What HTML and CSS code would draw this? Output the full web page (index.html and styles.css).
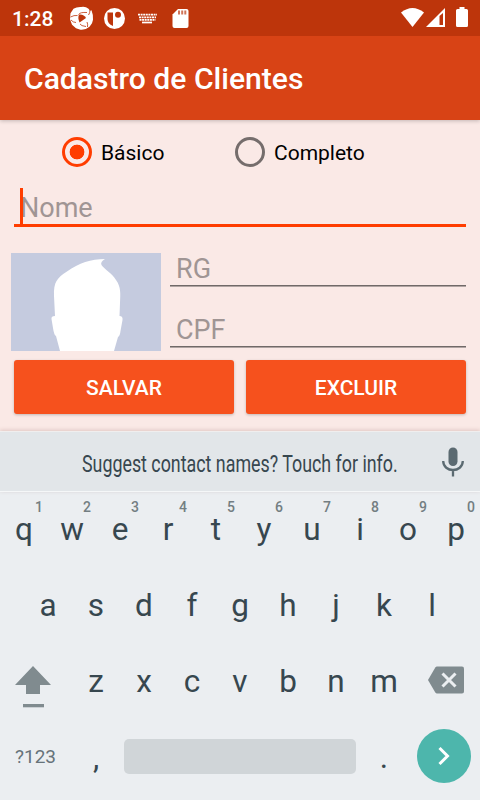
FILE: index.html
```html
<!DOCTYPE html>
<html lang="pt-BR">
<head>
<meta charset="utf-8">
<title>Cadastro de Clientes</title>
<link rel="stylesheet" href="styles.css">
</head>
<body>
<header class="status">
  <span class="time">1:28</span>
  <svg class="status-icons" width="130" height="36" viewBox="70 0 130 36" fill="#fff">
    <path d="M81 7q3-.5 5 .3l2.500 1.500 1.500 2 1.500-.5q2 5 1.500 9.500l-1 3.500-2.500 3.500q-4 3.500-9 3l-4.500-1.500-4-3.500-2-5.500.5-6 3-4.500q3-2 7.500-1.800z"/>
    <g fill="none" stroke="#bd350b" stroke-width=".8">
      <path d="M78.500 14.500Q80 12 87 12.500M88.500 15Q90 13 90 10M87 22Q88 24 87.500 27M80 24Q81 26 86 26.500M76 22.500Q73 22.500 71 20M77.500 15.500Q74 15 70.500 17"/>
    </g>
    <path d="M79 14.500Q84 14 86 18L79.500 22.500Q77.500 18 79 14.500z" fill="#bd350b"/>
    <circle cx="114.500" cy="18.500" r="10.500"/>
    <path d="M107.500 12.500h5.500v13.500q-5.500-2-5.500-7z" fill="#bd350b"/>
    <circle cx="118" cy="14.700" r="3" fill="#bd350b"/>
    <g fill="none" stroke="#fff" stroke-width="1.700">
      <path d="M138 14.700h19" stroke-dasharray="2 .6"/>
      <path d="M139 17.300h17" stroke-dasharray="2 .6"/>
      <path d="M139.500 19.800h16" stroke-dasharray="2 .6"/>
      <path d="M142 22.500h10"/>
    </g>
    <path d="M178 9h8.500q2 0 2 2v15q0 2-2 2h-12q-2 0-2-2V14.500z"/>
    <path d="M178 10.500h2v4h-2zM181.200 10.500h2v4h-2zM184.300 10.500h2v4h-2z" fill="#d0755a"/>
  </svg>
  <svg class="signal" width="70" height="36" viewBox="400 0 70 36" fill="#fff">
    <path d="M401 12.500q11.500-9 23 0L412.500 27z"/>
    <path d="M445 8v19h-19z"/>
    <path d="M440 15.500l3-2.500v12h-3.500v-9z" fill="#bd350b"/>
    <path d="M459.500 7h5v2h2q1.500 0 1.500 1.500v15q0 1.500-1.500 1.500h-9q-1.500 0-1.500-1.500v-15q0-1.500 1.500-1.500h2z"/>
  </svg>
</header>
<div class="appbar"><h1>Cadastro de Clientes</h1></div>
<main class="form">
  <div class="radios">
    <div class="radio on"><i class="ring"></i><span>Básico</span></div>
    <div class="radio"><i class="ring"></i><span>Completo</span></div>
  </div>
  <div class="field name"><i class="caret"></i><span>Nome</span></div>
  <div class="person">
    <svg class="photo" width="150" height="98" viewBox="0 0 150 98">
      <path fill="#c5cbdf" d="M0 0h150v98H0z"/>
      <path fill="#fff" d="M49 98L45 83Q43 82 42 75L40.500 66Q40 63 44 63L43 43C42.500 29 46 25 56 18.500C68 10 80 6 94 6Q89 9 90.500 12C93 16 101 20 105 27C110 34 109.500 40 109 50L108.500 63Q112 63 111.500 67L109.500 78Q109 83 107 84L103 98Z"/>
    </svg>
    <div class="docs">
      <div class="field doc"><span>RG</span></div>
      <div class="field doc"><span>CPF</span></div>
    </div>
  </div>
  <div class="actions">
    <div class="btn">SALVAR</div>
    <div class="btn">EXCLUIR</div>
  </div>
</main>
<div class="suggest">
  <span class="suggest-text">Suggest contact names? Touch for info.</span>
  <svg class="mic" width="22" height="30" viewBox="0 0 22 30">
    <rect x="6.500" y="0.500" width="9" height="18.500" rx="4.500" fill="#5b6a71"/>
    <path d="M1.200 14C1.200 26 20.800 26 20.800 14M11 23v6.500" fill="none" stroke="#5b6a71" stroke-width="2.300"/>
  </svg>
</div>
<section class="keyboard">
  <div class="row top">
    <div class="key">q<sup>1</sup></div><div class="key">w<sup>2</sup></div><div class="key">e<sup>3</sup></div><div class="key">r<sup>4</sup></div><div class="key">t<sup>5</sup></div><div class="key">y<sup>6</sup></div><div class="key">u<sup>7</sup></div><div class="key">i<sup>8</sup></div><div class="key">o<sup>9</sup></div><div class="key">p<sup>0</sup></div>
  </div>
  <div class="row">
    <div class="key">a</div><div class="key">s</div><div class="key">d</div><div class="key">f</div><div class="key">g</div><div class="key">h</div><div class="key">j</div><div class="key">k</div><div class="key">l</div>
  </div>
  <div class="row">
    <div class="wide"><svg class="shift" width="36" height="42" viewBox="0 0 36 42" fill="#808b8f"><path d="M18 0l18 19H25v9H11v-9H0z"/><path d="M8 38h21v3.300H8z"/></svg></div>
    <div class="key">z</div><div class="key">x</div><div class="key">c</div><div class="key">v</div><div class="key">b</div><div class="key">n</div><div class="key">m</div>
    <div class="wide"><svg class="erase" width="36" height="28" viewBox="0 0 36 28"><path fill="#808b8f" d="M9 .5H34q2 0 2 2v23q0 2-2 2H9q-1 0-1.700-1L0 14 7.300 1.500Q8 .5 9 .5z"/><path d="M14.500 7.500l13 13M27.500 7.500l-13 13" stroke="#ebeef1" stroke-width="3"/></svg></div>
  </div>
  <div class="row bottom">
    <div class="wide symbols">?123</div>
    <div class="key">,</div>
    <div class="space"></div>
    <div class="key">.</div>
    <div class="wide"><div class="go"><svg width="54" height="54" viewBox="0 0 54 54"><path d="M22.500 19l8 8-8 8" fill="none" stroke="#fff" stroke-width="3"/></svg></div></div>
  </div>
</section>
</body>
</html>
```
FILE: styles.css
```css
* { box-sizing: border-box; }
body { margin: 0; width: 480px; height: 800px; overflow: hidden; font-family: Roboto, sans-serif; background: #fae9e6; }
svg { display: block; }
.status { position: relative; z-index: 1; height: 36px; background: #bd350b; display: flex; }
.time { width: 70px; padding-left: 12px; font-size: 21px; line-height: 38px; font-weight: 500; color: #fff; }
.signal { margin-left: auto; margin-right: 10px; }
.appbar { position: relative; height: 84px; background: #d84315; box-shadow: 0 1px 4px rgba(0,0,0,.22); }
h1 { margin: 0; padding-left: 24px; font-size: 30.100px; line-height: 86px; font-weight: 500; color: #fff; }
.form { height: 311px; }
.radios { display: flex; padding: 17px 0 0 62px; height: 66px; }
.radio { display: flex; width: 173px; height: 30px; gap: 9px; font-size: 21px; line-height: 32px; color: #000; }
.ring { width: 30px; height: 30px; border: 3px solid #756d6c; border-radius: 50%; }
.on .ring { border-color: #ff3d00; background: radial-gradient(circle, #ff3d00 7px, transparent 7.700px); }
.field { color: #a09594; font-size: 27px; }
.name { height: 41px; margin: 0 14px; border-bottom: 3px solid #ff3d00; line-height: 44px; padding-left: 6px; position: relative; }
.caret { position: absolute; left: 6px; top: 2px; width: 3px; height: 37px; background: #ff3d00; }
.person { display: flex; gap: 9px; padding: 26px 14px 0 11px; }
.docs { flex: 1; }
.doc { height: 34px; line-height: 32px; padding-left: 6px; border-bottom: 1px solid #b0a4a2; box-shadow: inset 0 -1px #706968; }
.doc + .doc { height: 35px; margin-top: 26px; line-height: 34px; }
.actions { display: flex; gap: 12px; padding: 9px 14px 0; }
.btn { flex: 1; height: 54px; border-radius: 3px; background: #f6511d; color: #fff; font-size: 21px; font-weight: 500; line-height: 56px; text-align: center; box-shadow: 0 1px 3px rgba(0,0,0,.22); }
.suggest { position: relative; z-index: 1; height: 61px; background: #e2e6e9; border-top: 1px solid #f0eeee; border-bottom: 1px solid #f5f7f8; box-shadow: 0 -1px 4px rgba(120,60,50,.2); display: flex; justify-content: space-between; padding: 15px 16.500px 0 82px; }
.suggest-text { font-size: 24px; line-height: 34px; color: #37474f; white-space: nowrap; width: 314px; transform: scaleX(.743); transform-origin: left; }
.keyboard { height: 308px; background: #ebeef1; color: #37474f; }
.row { display: flex; justify-content: center; height: 76px; }
.top { height: 75px; }
.key { position: relative; width: 48px; font-size: 31.500px; line-height: 78px; text-align: center; }
.top .key { line-height: 75px; }
sup { position: absolute; right: 5px; top: 7px; font-size: 14px; line-height: 16px; font-weight: 500; color: #737e82; }
.wide { width: 72px; }
.shift { margin: 23px 0 0 15px; }
.erase { margin: 23px 0 0 20px; }
.symbols { font-size: 19px; line-height: 76px; padding-left: 15px; color: #66737a; }
.space { width: 232px; height: 35px; margin: 20px 4px 0; border-radius: 5px; background: #d0d5d8; }
.bottom .key { line-height: 77px; }
.go { width: 54px; height: 54px; margin: 10px 0 0 9px; border-radius: 50%; background: #4db6ac; }
```
